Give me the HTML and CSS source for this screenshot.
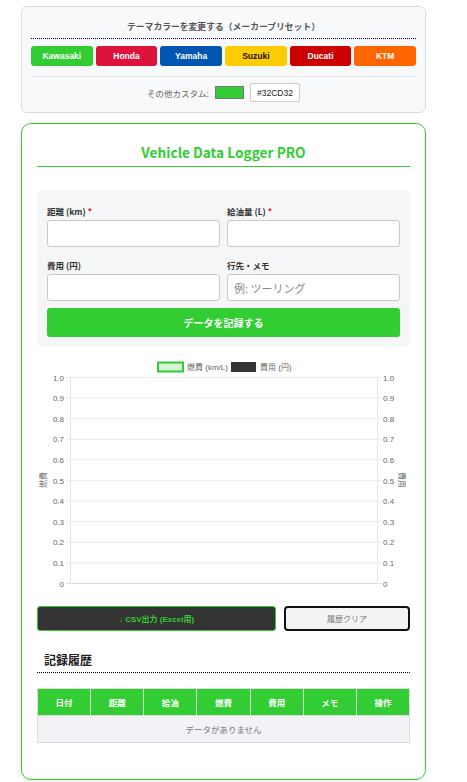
FILE: index.html
```html
<!DOCTYPE html>
<html lang="ja">
<head>
<meta charset="utf-8">
<title>Vehicle Data Logger PRO</title>
<link rel="stylesheet" href="styles.css">
</head>
<body>
<div class="wrap">
  <section class="theme">
    <h2 class="theme-title">テーマカラーを変更する（メーカープリセット）</h2>
    <div class="presets">
      <button class="preset kawasaki">Kawasaki</button>
      <button class="preset honda">Honda</button>
      <button class="preset yamaha">Yamaha</button>
      <button class="preset suzuki">Suzuki</button>
      <button class="preset ducati">Ducati</button>
      <button class="preset ktm">KTM</button>
    </div>
    <div class="custom">
      <span class="custom-label">その他カスタム:</span>
      <span class="swatch"></span>
      <input class="hex" type="text" value="#32CD32">
    </div>
  </section>

  <main class="card">
    <h1 class="title">Vehicle Data Logger PRO</h1>

    <form class="form">
      <div class="grid">
        <div class="field">
          <label>距離 (km) <span class="req">*</span></label>
          <input type="text">
        </div>
        <div class="field">
          <label>給油量 (L) <span class="req">*</span></label>
          <input type="text">
        </div>
        <div class="field">
          <label>費用 (円)</label>
          <input type="text">
        </div>
        <div class="field">
          <label>行先・メモ</label>
          <input type="text" placeholder="例: ツーリング">
        </div>
      </div>
      <button type="button" class="submit">データを記録する</button>
    </form>

    <div class="chart">
      <svg width="373" height="240" viewBox="0 0 373 240" xmlns="http://www.w3.org/2000/svg">
        <g class="legend">
          <rect x="121" y="7.5" width="25" height="9" fill="#d6f5d6" stroke="#32cd32" stroke-width="2"/>
          <text x="150" y="15">燃費 (km/L)</text>
          <rect x="194" y="7" width="25" height="10" fill="#333"/>
          <text x="223" y="15">費用 (円)</text>
        </g>
        <g class="grid-lines" stroke="#ececec" stroke-width="1">
          <line x1="29" y1="22.5" x2="345" y2="22.5"/>
          <line x1="29" y1="43.1" x2="345" y2="43.1"/>
          <line x1="29" y1="63.7" x2="345" y2="63.7"/>
          <line x1="29" y1="84.3" x2="345" y2="84.3"/>
          <line x1="29" y1="104.9" x2="345" y2="104.9"/>
          <line x1="29" y1="125.5" x2="345" y2="125.5"/>
          <line x1="29" y1="146.1" x2="345" y2="146.1"/>
          <line x1="29" y1="166.7" x2="345" y2="166.7"/>
          <line x1="29" y1="187.3" x2="345" y2="187.3"/>
          <line x1="29" y1="207.9" x2="345" y2="207.9"/>
          <line x1="29" y1="228.5" x2="345" y2="228.5" stroke="#dedede"/>
          <line x1="33.5" y1="22" x2="33.5" y2="229" stroke="#e6e6e6"/>
          <line x1="340.5" y1="22" x2="340.5" y2="229" stroke="#e6e6e6"/>
        </g>
        <g class="ticks-left" text-anchor="end">
          <text x="27" y="25.5">1.0</text>
          <text x="27" y="46.1">0.9</text>
          <text x="27" y="66.7">0.8</text>
          <text x="27" y="87.3">0.7</text>
          <text x="27" y="107.9">0.6</text>
          <text x="27" y="128.5">0.5</text>
          <text x="27" y="149.1">0.4</text>
          <text x="27" y="169.7">0.3</text>
          <text x="27" y="190.3">0.2</text>
          <text x="27" y="210.9">0.1</text>
          <text x="27" y="231.5">0</text>
        </g>
        <g class="ticks-right" text-anchor="start">
          <text x="346" y="25.5">1.0</text>
          <text x="346" y="46.1">0.9</text>
          <text x="346" y="66.7">0.8</text>
          <text x="346" y="87.3">0.7</text>
          <text x="346" y="107.9">0.6</text>
          <text x="346" y="128.5">0.5</text>
          <text x="346" y="149.1">0.4</text>
          <text x="346" y="169.7">0.3</text>
          <text x="346" y="190.3">0.2</text>
          <text x="346" y="210.9">0.1</text>
          <text x="346" y="231.5">0</text>
        </g>
        <text class="axis-title" text-anchor="middle" transform="translate(9 125) rotate(-90)">燃費</text>
        <text class="axis-title" text-anchor="middle" transform="translate(362 125) rotate(90)">費用</text>
      </svg>
    </div>

    <div class="actions">
      <button type="button" class="csv">↓ CSV出力 (Excel用)</button>
      <button type="button" class="clear">履歴クリア</button>
    </div>

    <h3 class="history">記録履歴</h3>

    <table class="table">
      <thead>
        <tr><th>日付</th><th>距離</th><th>給油</th><th>燃費</th><th>費用</th><th>メモ</th><th>操作</th></tr>
      </thead>
      <tbody>
        <tr><td colspan="7" class="empty">データがありません</td></tr>
      </tbody>
    </table>
  </main>
</div>
</body>
</html>
```

FILE: styles.css
```css
* { box-sizing: border-box; }

html, body {
  margin: 0;
  padding: 0;
  background: #ffffff;
}

body {
  font-family: "Noto Sans CJK JP", "Noto Sans", sans-serif;
  color: #333;
  font-size: 8.5px;
}

.wrap {
  width: 405px;
  margin-left: 21px;
  padding-top: 6px;
  padding-bottom: 4px;
}

/* theme panel */
.theme {
  background: #f8f9fa;
  border: 1px solid #dcdcdc;
  border-radius: 6px;
  padding: 10px 9px 10px 9px;
}

.theme-title {
  margin: 3px 0 0 0;
  font-size: 8.8px;
  line-height: 14px;
  font-weight: 700;
  color: #555;
  text-align: center;
  padding-bottom: 4px;
  border-bottom: 1px dotted #000080;
}

.presets {
  display: flex;
  gap: 3px;
  margin-top: 7px;
  padding-bottom: 10px;
  border-bottom: 1px solid #e6e6e6;
}

.preset {
  flex: 1;
  height: 20px;
  border: none;
  border-radius: 3px;
  font-family: "Liberation Sans", Arial, sans-serif;
  font-weight: 700;
  font-size: 8.5px;
  color: #fff;
  padding: 0;
}
.kawasaki { background: #32cd32; }
.honda { background: #dc143c; }
.yamaha { background: #0055b3; }
.suzuki { background: #ffcc00; color: #111; }
.ducati { background: #cc0000; }
.ktm { background: #ff6600; }

.custom {
  display: flex;
  justify-content: center;
  align-items: center;
  padding-top: 6px;
}

.custom-label {
  color: #666;
  font-size: 8.5px;
  margin-right: 6px;
}

.swatch {
  width: 29px;
  height: 13px;
  background: #32cd32;
  border: 1px solid #777;
  margin-right: 6px;
}

.hex {
  width: 50px;
  height: 19px;
  border: 1px solid #ccc;
  border-radius: 2px;
  background: #fff;
  font-family: "Liberation Sans", Arial, sans-serif;
  font-size: 8.5px;
  color: #222;
  text-align: center;
  padding: 0;
}

/* main card */
.card {
  display: block;
  margin-top: 10px;
  background: #fff;
  border: 1px solid #32cd32;
  border-radius: 10px;
  padding: 16px 15px 16px 15px;
  box-shadow: 0 3px 8px rgba(0, 0, 0, 0.07);
}

.title {
  margin: 0;
  padding-top: 2px;
  padding-bottom: 4px;
  font-size: 13.7px;
  line-height: 20px;
  font-weight: 700;
  color: #32cd32;
  text-align: center;
  border-bottom: 1px solid #32cd32;
}

.form {
  margin-top: 23px;
  background: #f5f6f8;
  border-radius: 5px;
  padding: 15px 10px 10px 10px;
}

.grid {
  display: grid;
  grid-template-columns: 1fr 1fr;
  column-gap: 7px;
  row-gap: 12px;
}

.field {
  display: flex;
  flex-direction: column;
}

.field label {
  font-size: 8.5px;
  line-height: 12px;
  font-weight: 700;
  color: #333;
  margin-bottom: 3px;
}

.req { color: #e00; }

.field input {
  height: 27px;
  border: 1px solid #c8c8c8;
  border-radius: 3px;
  background: #fff;
  padding: 0 6px;
  font-family: "Noto Sans CJK JP", sans-serif;
  font-size: 11px;
}

.field input::placeholder { color: #8a8a8a; }

.submit {
  display: block;
  width: 100%;
  margin-top: 7px;
  height: 29px;
  border: none;
  border-radius: 3px;
  background: #32cd32;
  color: #fff;
  font-family: "Noto Sans CJK JP", sans-serif;
  font-size: 10px;
  font-weight: 700;
}

/* chart */
.chart {
  margin-top: 8px;
  height: 240px;
}
.chart svg { display: block; }
.chart text {
  font-family: "Liberation Sans", Arial, "Noto Sans CJK JP", sans-serif;
  font-size: 8px;
  fill: #666;
}
.chart .axis-title {
  font-family: "Noto Sans CJK JP", sans-serif;
  font-size: 8px;
}

/* actions */
.actions {
  display: flex;
  gap: 8px;
  margin-top: 11px;
}

.csv {
  width: 239px;
  height: 25px;
  background: #333;
  border: 1px solid #32cd32;
  border-radius: 3px;
  color: #32cd32;
  font-family: "Liberation Sans", Arial, "Noto Sans CJK JP", sans-serif;
  font-weight: 700;
  font-size: 8px;
  padding: 0;
}

.clear {
  flex: 1;
  height: 25px;
  background: #f3f3f3;
  border: 2px solid #111;
  border-radius: 4px;
  color: #777;
  font-family: "Noto Sans CJK JP", sans-serif;
  font-size: 8px;
  padding: 0;
}

.history {
  margin: 20px 0 0 0;
  padding: 0 0 3px 7px;
  font-size: 12px;
  line-height: 18px;
  font-weight: 700;
  color: #222;
  border-bottom: 1px dotted #000;
}

.table {
  width: 100%;
  margin-top: 15px;
  margin-bottom: 20px;
  border-collapse: collapse;
  table-layout: fixed;
  border: 1px solid #dcdcdc;
}

.table th {
  height: 27px;
  background: #32cd32;
  color: #fff;
  font-size: 8.5px;
  font-weight: 700;
  border: 1px solid #dcdcdc;
  padding: 0;
}

.table td.empty {
  height: 27px;
  background: #f2f2f7;
  text-align: center;
  color: #777;
  font-size: 8.5px;
  padding: 0;
}
```
